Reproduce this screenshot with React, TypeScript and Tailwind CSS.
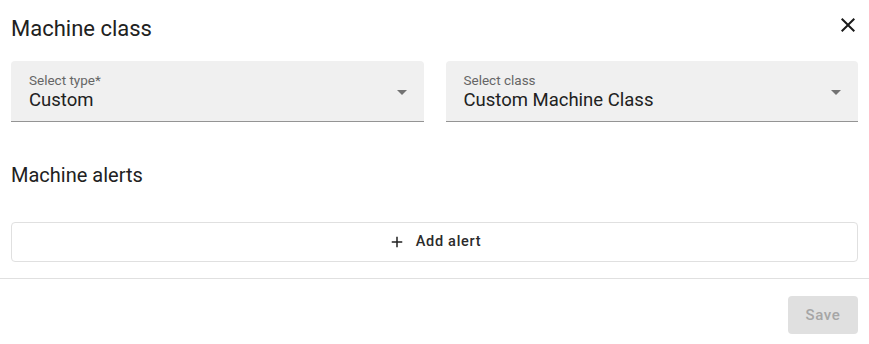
import React from 'react';

const font = { fontFamily: 'Roboto, "Liberation Sans", sans-serif' };

const SelectField = ({ label, value }: { label: string; value: string }) => (
  <div className="relative h-[61px] rounded-t-[4px] bg-[#f0f0f0] border-b border-[#949494] pl-[18px] pr-[10px] flex items-center">
    <div className="flex-1 pt-[1px]">
      <div className="text-[13.5px] leading-[16px] text-[#666666]">{label}</div>
      <div className="text-[18.5px] leading-[24px] text-[#212121]">{value}</div>
    </div>
    <svg width="24" height="24" viewBox="0 0 24 24" className="fill-[#737373] mt-[1px]">
      <path d="M7 10l5 5 5-5z" />
    </svg>
  </div>
);

const App = () => {
  return (
    <div className="w-[869px] h-[344px] bg-white flex flex-col" style={font}>
      {/* header */}
      <div className="flex justify-between items-start pt-[13px] pl-[11px] pr-[9px]">
        <h2 className="text-[22px] leading-8 font-normal text-[#212121]">Machine class</h2>
        <svg width="24" height="24" viewBox="0 0 24 24" className="fill-[#1a1a1a]">
          <path d="M19 6.41 17.59 5 12 10.59 6.41 5 5 6.41 10.59 12 5 17.59 6.41 19 12 13.41 17.59 19 19 17.59 13.41 12z" />
        </svg>
      </div>

      {/* selects */}
      <div className="grid grid-cols-2 gap-[22px] px-[11px] mt-[16px]">
        <SelectField label="Select type*" value="Custom" />
        <SelectField label="Select class" value="Custom Machine Class" />
      </div>

      {/* alerts */}
      <div className="px-[11px] mt-[37px]">
        <h3 className="text-[20px] leading-8 font-normal text-[#212121]">Machine alerts</h3>
        <button className="mt-[31px] w-full h-[40px] border border-[#e0e0e0] rounded-[4px] flex items-center justify-center gap-[10px] text-[14.5px] font-medium tracking-[0.7px] text-[#2b2b2b]">
          <svg width="18" height="18" viewBox="0 0 24 24" className="fill-[#212121]">
            <path d="M19 13h-6v6h-2v-6H5v-2h6V5h2v6h6v2z" />
          </svg>
          Add alert
        </button>
      </div>

      <div className="mt-[16px] h-px bg-[#e0e0e0]" />

      {/* footer */}
      <div className="flex justify-end px-[11px] pt-[17px]">
        <button
          disabled
          className="h-[38px] w-[70px] rounded-[4px] bg-[#e0e0e0] text-[15px] font-medium tracking-[0.6px] text-[#a6a6a6]"
        >
          Save
        </button>
      </div>
    </div>
  );
};

export default App;
